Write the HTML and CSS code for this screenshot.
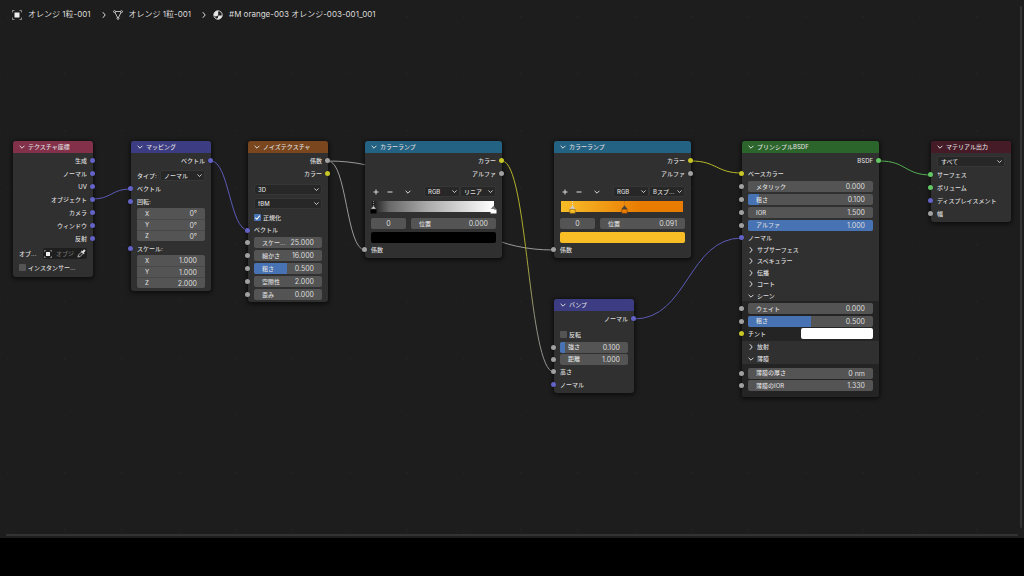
FILE: index.html
```html
<!DOCTYPE html>
<html lang="ja">
<head>
<meta charset="utf-8">
<title>シェーダーエディター</title>
<link rel="stylesheet" href="styles.css">
</head>
<body>
<svg class="defs" aria-hidden="true">
  <symbol id="down" viewBox="0 0 8 8"><path d="M1.6 2.8 4 5.2 6.4 2.8" fill="none" stroke="currentColor" stroke-width="1"/></symbol>
  <symbol id="right" viewBox="0 0 8 8"><path d="M2.8 1.2 5.2 4 2.8 6.8" fill="none" stroke="currentColor" stroke-width="1"/></symbol>
  <symbol id="plus" viewBox="0 0 8 8"><path d="M4 1.5v5M1.5 4h5" stroke="currentColor" stroke-width="1"/></symbol>
  <symbol id="minus" viewBox="0 0 8 8"><path d="M1.5 4h5" stroke="currentColor" stroke-width="1"/></symbol>
  <symbol id="object" viewBox="0 0 10 10"><path d="M2.5 2.5h5v5h-5z" fill="#eee"/><path d="M.5 2.5v-2h2M7.5.5h2v2M9.5 7.5v2h-2M2.5 9.5h-2v-2" fill="none" stroke="#aaa" stroke-width=".8"/></symbol>
  <symbol id="mesh" viewBox="0 0 10 10"><path d="M1.5 1.5h7L5 8.5z" fill="none" stroke="#ccc" stroke-width=".9"/><g fill="#1d1d1d" stroke="#ddd" stroke-width=".8"><circle cx="1.5" cy="1.6" r="1"/><circle cx="8.5" cy="1.6" r="1"/><circle cx="5" cy="8.4" r="1"/></g></symbol>
  <symbol id="material" viewBox="0 0 10 10"><circle cx="5" cy="5" r="4.2" fill="#1d1d1d" stroke="#ddd" stroke-width=".9"/><path d="M5.2 4.8V.8A4.200 4.200 0 0 0 .8 5Q1.200 6.600 3 6.400 5.200 6.200 5.200 4.800zM5.200 5.400H9.200A4.200 4.200 0 0 1 3.600 9Q5.400 8.200 5.200 5.400z" fill="#e6e6e6"/></symbol>
  <symbol id="dropper" viewBox="0 0 10 10"><path d="M1 9l.7-2.4 3.2-3.2 1.7 1.7-3.2 3.2z" fill="none" stroke="#ccc" stroke-width=".9"/><path d="M4.3 2.5l.8-.8.8.7L7.400.9Q8.500.3 9.200 1.200 9.700 2 8.900 2.700L7.600 4.100l.7.8-.8.8z" fill="#ddd"/></symbol>
  <symbol id="check" viewBox="0 0 8 8"><path d="M1.500 4.100 3.300 6 6.600 1.900" fill="none" stroke="#fff" stroke-width="1.200"/></symbol>
</svg>

<div class="editor">
  <nav class="path" aria-label="パス">
    <a href="#"><svg class="icon"><use href="#object"/></svg>オレンジ 1粒-001</a>
    <svg class="sep"><use href="#right"/></svg>
    <a href="#"><svg class="icon"><use href="#mesh"/></svg>オレンジ 1粒-001</a>
    <svg class="sep"><use href="#right"/></svg>
    <a href="#"><svg class="icon"><use href="#material"/></svg>#M orange-003 オレンジ-003-001_001</a>
  </nav>

  <main class="canvas">
    <svg class="links" aria-hidden="true">
      <defs>
        <linearGradient id="fade" gradientUnits="userSpaceOnUse" x1="502" y1="161" x2="554" y2="372"><stop offset="0" stop-color="#b4b427"/><stop offset=".4" stop-color="#a8a82c"/><stop offset=".75" stop-color="#8f8f80"/><stop offset="1" stop-color="#929292"/></linearGradient>
      </defs>
      <path class="vec" d="M93 199C111 199 112 189 130 189"/>
      <path class="vec" d="M211 161C229 161 230 230 248 230"/>
      <path class="val" d="M328 161C347 161 346 250 365 250"/>
      <path class="val" d="M328 161C441 161 441 250 554 250"/>
      <path d="M502 161C528 161 528 372 554 372" stroke="url(#fade)"/>
      <path class="col" d="M691 161C717 161 716 173 742 173"/>
      <path class="vec" d="M634 319C688 319 688 238 742 238"/>
      <path class="shd" d="M880 161C906 161 905 175 931 175"/>
    </svg>

    <section class="node small n-coord">
      <button class="title red"><svg><use href="#down"/></svg>テクスチャ座標</button>
      <div class="row out">生成<i class="dot vec"></i></div>
      <div class="row out">ノーマル<i class="dot vec"></i></div>
      <div class="row out">UV<i class="dot vec"></i></div>
      <div class="row out">オブジェクト<i class="dot vec"></i></div>
      <div class="row out">カメラ<i class="dot vec"></i></div>
      <div class="row out">ウィンドウ<i class="dot vec"></i></div>
      <div class="row out">反射<i class="dot vec"></i></div>
      <div class="row split near"><label for="obj">オブ...</label><span class="picker"><svg><use href="#object"/></svg><input id="obj" type="text" placeholder="オブジ"><svg><use href="#dropper"/></svg></span></div>
      <label class="row tick after"><input type="checkbox">インスタンサー...</label>
    </section>

    <section class="node small n-map">
      <button class="title blue"><svg><use href="#down"/></svg>マッピング</button>
      <div class="row out">ベクトル<i class="dot vec"></i></div>
      <div class="row split near"><label for="type">タイプ:</label><span class="select"><select id="type"><option>ノーマル</option></select><svg><use href="#down"/></svg></span></div>
      <div class="row">ベクトル<i class="dot vec"></i></div>
      <div class="row">回転:<i class="dot vec"></i></div>
      <div class="stack">
        <label class="field"><span>X</span><input type="text" value="0°"></label>
        <label class="field"><span>Y</span><input type="text" value="0°"></label>
        <label class="field"><span>Z</span><input type="text" value="0°"></label>
      </div>
      <div class="row after">スケール:<i class="dot vec"></i></div>
      <div class="stack">
        <label class="field"><span>X</span><input type="text" value="1.000"></label>
        <label class="field"><span>Y</span><input type="text" value="1.000"></label>
        <label class="field"><span>Z</span><input type="text" value="2.000"></label>
      </div>
    </section>

    <section class="node small n-noise">
      <button class="title brown"><svg><use href="#down"/></svg>ノイズテクスチャ</button>
      <div class="row out">係数<i class="dot val"></i></div>
      <div class="row out">カラー<i class="dot col"></i></div>
      <div class="row spaced"><span class="select"><select aria-label="次元"><option>3D</option></select><svg><use href="#down"/></svg></span></div>
      <div class="row after"><span class="select"><select aria-label="タイプ"><option>fBM</option></select><svg><use href="#down"/></svg></span></div>
      <label class="row tick after"><input type="checkbox" checked><svg><use href="#check"/></svg>正規化</label>
      <div class="row tight">ベクトル<i class="dot vec"></i></div>
      <div class="row"><label class="field"><span>スケー...</span><input type="text" value="25.000"></label><i class="dot val"></i></div>
      <div class="row"><label class="field"><span>細かさ</span><input type="text" value="16.000"></label><i class="dot val"></i></div>
      <div class="row"><label class="field"><b style="width:49%"></b><span>粗さ</span><input type="text" value="0.500"></label><i class="dot val"></i></div>
      <div class="row"><label class="field"><span>空隙性</span><input type="text" value="2.000"></label><i class="dot val"></i></div>
      <div class="row"><label class="field"><span>歪み</span><input type="text" value="0.000"></label><i class="dot val"></i></div>
    </section>

    <section class="node large n-ramp1">
      <button class="title teal"><svg><use href="#down"/></svg>カラーランプ</button>
      <div class="row out">カラー<i class="dot col"></i></div>
      <div class="row out">アルファ<i class="dot val"></i></div>
      <div class="tools">
        <button aria-label="追加"><svg><use href="#plus"/></svg></button>
        <button aria-label="削除"><svg><use href="#minus"/></svg></button>
        <button aria-label="ツール"><svg><use href="#down"/></svg></button>
        <span class="select"><select aria-label="カラーモード"><option>RGB</option></select><svg><use href="#down"/></svg></span>
        <span class="select"><select aria-label="補間"><option>リニア</option></select><svg><use href="#down"/></svg></span>
      </div>
      <div class="ramp grey">
        <svg class="stop" style="left:1%" viewBox="0 0 7 13"><path d="M3.500 0v6" stroke="#888" stroke-dasharray="1"/><path d="M.8 8 3.500 4.800 6.200 8z" fill="#ddd" stroke="#333" stroke-width=".5"/><path d="M.5 8.500h6v4h-6z" fill="#000"/></svg>
        <svg class="stop" style="left:99%" viewBox="0 0 7 13"><path d="M.8 8 3.500 4.800 6.200 8z" fill="#777"/><path d="M.5 8.500h6v4h-6z" fill="#fff"/></svg>
      </div>
      <div class="pair"><input class="index" type="text" value="0" aria-label="番号"><label class="field"><span>位置</span><input type="text" value="0.000"></label></div>
      <button class="swatch black" aria-label="色"></button>
      <div class="row">係数<i class="dot val"></i></div>
    </section>

    <section class="node large n-ramp2">
      <button class="title teal"><svg><use href="#down"/></svg>カラーランプ</button>
      <div class="row out">カラー<i class="dot col"></i></div>
      <div class="row out">アルファ<i class="dot val"></i></div>
      <div class="tools">
        <button aria-label="追加"><svg><use href="#plus"/></svg></button>
        <button aria-label="削除"><svg><use href="#minus"/></svg></button>
        <button aria-label="ツール"><svg><use href="#down"/></svg></button>
        <span class="select"><select aria-label="カラーモード"><option>RGB</option></select><svg><use href="#down"/></svg></span>
        <span class="select"><select aria-label="補間"><option>Bスプ...</option></select><svg><use href="#down"/></svg></span>
      </div>
      <div class="ramp orange">
        <svg class="stop" style="left:9%" viewBox="0 0 7 13"><path d="M3.500 0v5" stroke="#ddd" stroke-dasharray="1"/><path d="M.5 8 3.500 4.500 6.500 8z" fill="#ccc"/><path d="M.8 8.300h5.400v4H.8z" fill="#f9bd25" stroke="#7a5a20" stroke-width=".6"/></svg>
        <svg class="stop" style="left:52%" viewBox="0 0 7 13"><path d="M3.500 0v5" stroke="#b86a20" stroke-dasharray="1"/><path d="M.5 8 3.500 4.500 6.500 8z" fill="#444"/><path d="M.8 8.300h5.400v4H.8z" fill="#ec7d05" stroke="#6b3c10" stroke-width=".6"/></svg>
      </div>
      <div class="pair"><input class="index" type="text" value="0" aria-label="番号"><label class="field"><span>位置</span><input type="text" value="0.091"></label></div>
      <button class="swatch amber" aria-label="色"></button>
      <div class="row">係数<i class="dot val"></i></div>
    </section>

    <section class="node small n-bump">
      <button class="title blue"><svg><use href="#down"/></svg>バンプ</button>
      <div class="row out">ノーマル<i class="dot vec"></i></div>
      <label class="row tick spaced"><input type="checkbox">反転</label>
      <div class="row tight"><label class="field"><b style="width:8%"></b><span>強さ</span><input type="text" value="0.100"></label><i class="dot val"></i></div>
      <div class="row tight"><label class="field"><span>距離</span><input type="text" value="1.000"></label><i class="dot val"></i></div>
      <div class="row">高さ<i class="dot val"></i></div>
      <div class="row">ノーマル<i class="dot vec"></i></div>
    </section>

    <section class="node large n-bsdf">
      <button class="title green"><svg><use href="#down"/></svg>プリンシプルBSDF</button>
      <div class="row out">BSDF<i class="dot shd"></i></div>
      <div class="row">ベースカラー<i class="dot col"></i></div>
      <div class="row"><label class="field"><span>メタリック</span><input type="text" value="0.000"></label><i class="dot val"></i></div>
      <div class="row"><label class="field"><b style="width:9%"></b><span>粗さ</span><input type="text" value="0.100"></label><i class="dot val"></i></div>
      <div class="row"><label class="field"><span>IOR</span><input type="text" value="1.500"></label><i class="dot val"></i></div>
      <div class="row tight"><label class="field"><b style="width:100%"></b><span>アルファ</span><input type="text" value="1.000"></label><i class="dot val"></i></div>
      <div class="row">ノーマル<i class="dot vec"></i></div>
      <button class="panel"><svg><use href="#right"/></svg>サブサーフェス</button>
      <button class="panel"><svg><use href="#right"/></svg>スペキュラー</button>
      <button class="panel"><svg><use href="#right"/></svg>伝播</button>
      <button class="panel"><svg><use href="#right"/></svg>コート</button>
      <button class="panel"><svg><use href="#down"/></svg>シーン</button>
      <div class="group">
        <div class="row"><label class="field"><span>ウェイト</span><input type="text" value="0.000"></label><i class="dot val"></i></div>
        <div class="row tight"><label class="field"><b style="width:50%"></b><span>粗さ</span><input type="text" value="0.500"></label><i class="dot val"></i></div>
        <div class="row tint">チント<button class="swatch white" aria-label="チント"></button><i class="dot col"></i></div>
      </div>
      <button class="panel"><svg><use href="#right"/></svg>放射</button>
      <button class="panel"><svg><use href="#down"/></svg>薄膜</button>
      <div class="group last">
        <div class="row tight"><label class="field"><span>薄膜の厚さ</span><input type="text" value="0 nm"></label><i class="dot val"></i></div>
        <div class="row"><label class="field"><span>薄膜のIOR</span><input type="text" value="1.330"></label><i class="dot val"></i></div>
      </div>
    </section>

    <section class="node small n-out">
      <button class="title wine"><svg><use href="#down"/></svg>マテリアル出力</button>
      <div class="row target"><span class="select"><select aria-label="ターゲット"><option>すべて</option></select><svg><use href="#down"/></svg></span></div>
      <div class="row">サーフェス<i class="dot shd"></i></div>
      <div class="row">ボリューム<i class="dot shd"></i></div>
      <div class="row">ディスプレイスメント<i class="dot vec"></i></div>
      <div class="row">幅<i class="dot val"></i></div>
    </section>
  </main>
  <div class="scroll-x"></div>
  <div class="scroll-y"></div>
</div>
</body>
</html>
```

FILE: styles.css
```css
* { box-sizing: border-box; }

body {
  margin: 0;
  min-height: 100vh;
  display: flex;
  flex-direction: column;
  padding-bottom: 38px;
  background: #000;
  color: #dcdcdc;
  font: 500 6px/1 Inter, "Noto Sans CJK JP", sans-serif;
}

button, input, select {
  margin: 0;
  padding: 0;
  border: 0;
  border-radius: 0;
  background: none;
  color: inherit;
  font: inherit;
  appearance: none;
  outline: 0;
}

a { color: inherit; text-decoration: none; }
svg { width: 8px; height: 8px; flex: none; }
.defs { position: absolute; width: 0; height: 0; }

.editor {
  position: relative;
  flex: 1;
  overflow: hidden;
  background: radial-gradient(circle, #222 1px, transparent 1px) 36px 45px / 57px 57px #1d1d1d;
}

.path {
  display: flex;
  align-items: center;
  gap: 9px;
  padding: 9px 12px;
  font-size: 8px;
  font-weight: 400;
  line-height: 11px;
}
.path a { display: flex; align-items: center; gap: 6px; white-space: pre; }
.path .icon { width: 10px; height: 10px; }
.path .sep + a { margin-left: -4px; }

.canvas { position: absolute; inset: 0; }
.links { position: absolute; inset: 0; width: 100%; height: 100%; fill: none; stroke-width: 1; }
.links .vec { stroke: #5a5ab6; }
.links .val { stroke: #9a9a9a; }
.links .col { stroke: #b8b828; }
.links .shd { stroke: #55b055; }

.node {
  position: absolute;
  top: 141px;
  display: flex;
  flex-direction: column;
  padding-bottom: 2px;
  border-radius: 3px;
  background: #303030;
  box-shadow: 0 1px 4px 1px rgba(0, 0, 0, .6);
}
.small { width: 80px; }
.large { width: 137px; }
.n-coord { left: 13px; padding-bottom: 3px; }
.n-map { left: 131px; padding-bottom: 3px; }
.n-noise { left: 248px; padding-bottom: 1px; }
.n-ramp1 { left: 365px; }
.n-ramp2 { left: 554px; }
.n-bump { left: 554px; top: 299px; }
.n-bsdf { left: 742px; padding-bottom: 0; }
.n-out { left: 931px; }

.title {
  display: flex;
  align-items: center;
  gap: 2px;
  height: 12px;
  margin-bottom: 1px;
  padding-left: 5px;
  border-radius: 3px 3px 0 0;
}
.red { background: #83314a; }
.blue { background: #3c3c83; }
.brown { background: #79461d; }
.teal { background: #246283; }
.green { background: #2b652b; }
.wine { background: #461b28; }

.row {
  position: relative;
  display: flex;
  align-items: center;
  height: 13px;
  padding: 0 6px;
  white-space: nowrap;
}
.out { justify-content: flex-end; }
.tight { height: 12px; }
.spaced { margin-top: 3px; }
.near { margin-top: 2px; }
.after { margin-top: 1px; }
.target { margin-top: 1px; }
.split { justify-content: space-between; }

.dot {
  position: absolute;
  left: -3px;
  width: 5px;
  height: 5px;
  border-radius: 50%;
  box-shadow: 0 0 1px #111;
}
.out .dot { left: auto; right: -2px; }
.dot.vec { background: #6363c7; }
.dot.val { background: #a1a1a1; }
.dot.col { background: #c7c729; }
.dot.shd { background: #63c763; }

.field {
  position: relative;
  display: flex;
  flex: 1;
  align-items: center;
  height: 11px;
  min-width: 0;
  padding: 0 8px;
  border-radius: 2px;
  background: #545454;
  overflow: hidden;
}
.field b { position: absolute; inset: 0 auto 0 0; background: #4772b3; }
.field span, .field input { position: relative; }
.field input { flex: 1; width: 0; min-width: 0; height: 11px; text-align: right; }
.field input, .index { font-size: 7px; font-weight: 400; }

.stack { display: flex; flex-direction: column; margin: 0 6px; border-radius: 2px; overflow: hidden; }
.stack .field { flex: none; border-radius: 0; }
.stack .field + .field { border-top: 1px solid #484848; }

.select {
  position: relative;
  display: flex;
  flex: 1;
  align-items: center;
  height: 11px;
  border: 1px solid #363636;
  border-radius: 2px;
  background: #272727;
}
.select select { width: 100%; height: 9px; padding-left: 3px; }
.select svg { position: absolute; right: 1px; width: 7px; height: 7px; pointer-events: none; }
.split .select { flex: none; width: 45px; }

.picker {
  display: flex;
  align-items: center;
  gap: 4px;
  width: 44px;
  height: 11px;
  padding: 0 1px;
  border-radius: 2px;
  background: #1e1e1e;
}
.picker input { flex: 1; width: 0; min-width: 0; }
.picker input::placeholder { color: #696969; opacity: 1; }
.picker svg:last-child { width: 9px; height: 9px; margin-left: -4px; }

.tick { gap: 2px; }
.tick input { width: 7px; height: 7px; border-radius: 1px; background: #545454; }
.tick input:checked { background: #4772b3; }
.tick svg { position: absolute; left: 6px; width: 7px; height: 7px; pointer-events: none; }

.tools { display: flex; align-items: center; height: 11px; margin: 6px 6px 4px; }
.tools button { display: flex; width: 14px; padding-left: 1px; }
.tools button:nth-child(3) { width: 25px; padding-left: 5px; }

.ramp { position: relative; height: 11px; margin: 0 8px 6px 7px; }
.grey { background: linear-gradient(90deg, #181818, #686868 14%, #aaa 45%, #fff); }
.orange { background: linear-gradient(90deg, #f9bd25, #f5b323 12%, #ed8b0c 50%, #e87c00 65%, #e87c00); }
.stop { position: absolute; top: 0; width: 7px; height: 13px; margin-left: -3px; }

.pair { display: flex; gap: 5px; margin: 0 6px 3px; }
.index { width: 35px; height: 11px; border-radius: 2px; background: #545454; text-align: center; }

.swatch { height: 11px; margin: 0 6px; border-radius: 2px; }
.black { background: #000; }
.amber { background: #f9bd25; }
.white { width: 72px; margin: 0; background: #fff; }

.panel { display: flex; align-items: center; gap: 2px; height: 11px; padding-left: 5px; }
.panel:nth-of-type(odd) { height: 12px; }
.group { padding: 1px 0; background: #242424; }
.last { padding: 3px 0 5px; border-radius: 0 0 3px 3px; }
.tint { justify-content: space-between; }

.scroll-x { position: absolute; left: 6px; right: 6px; bottom: 2px; height: 2px; border-radius: 1px; background: #333; }
.scroll-y { position: absolute; top: 6px; bottom: 10px; right: 2px; width: 2px; border-radius: 1px; background: #333; }
```
